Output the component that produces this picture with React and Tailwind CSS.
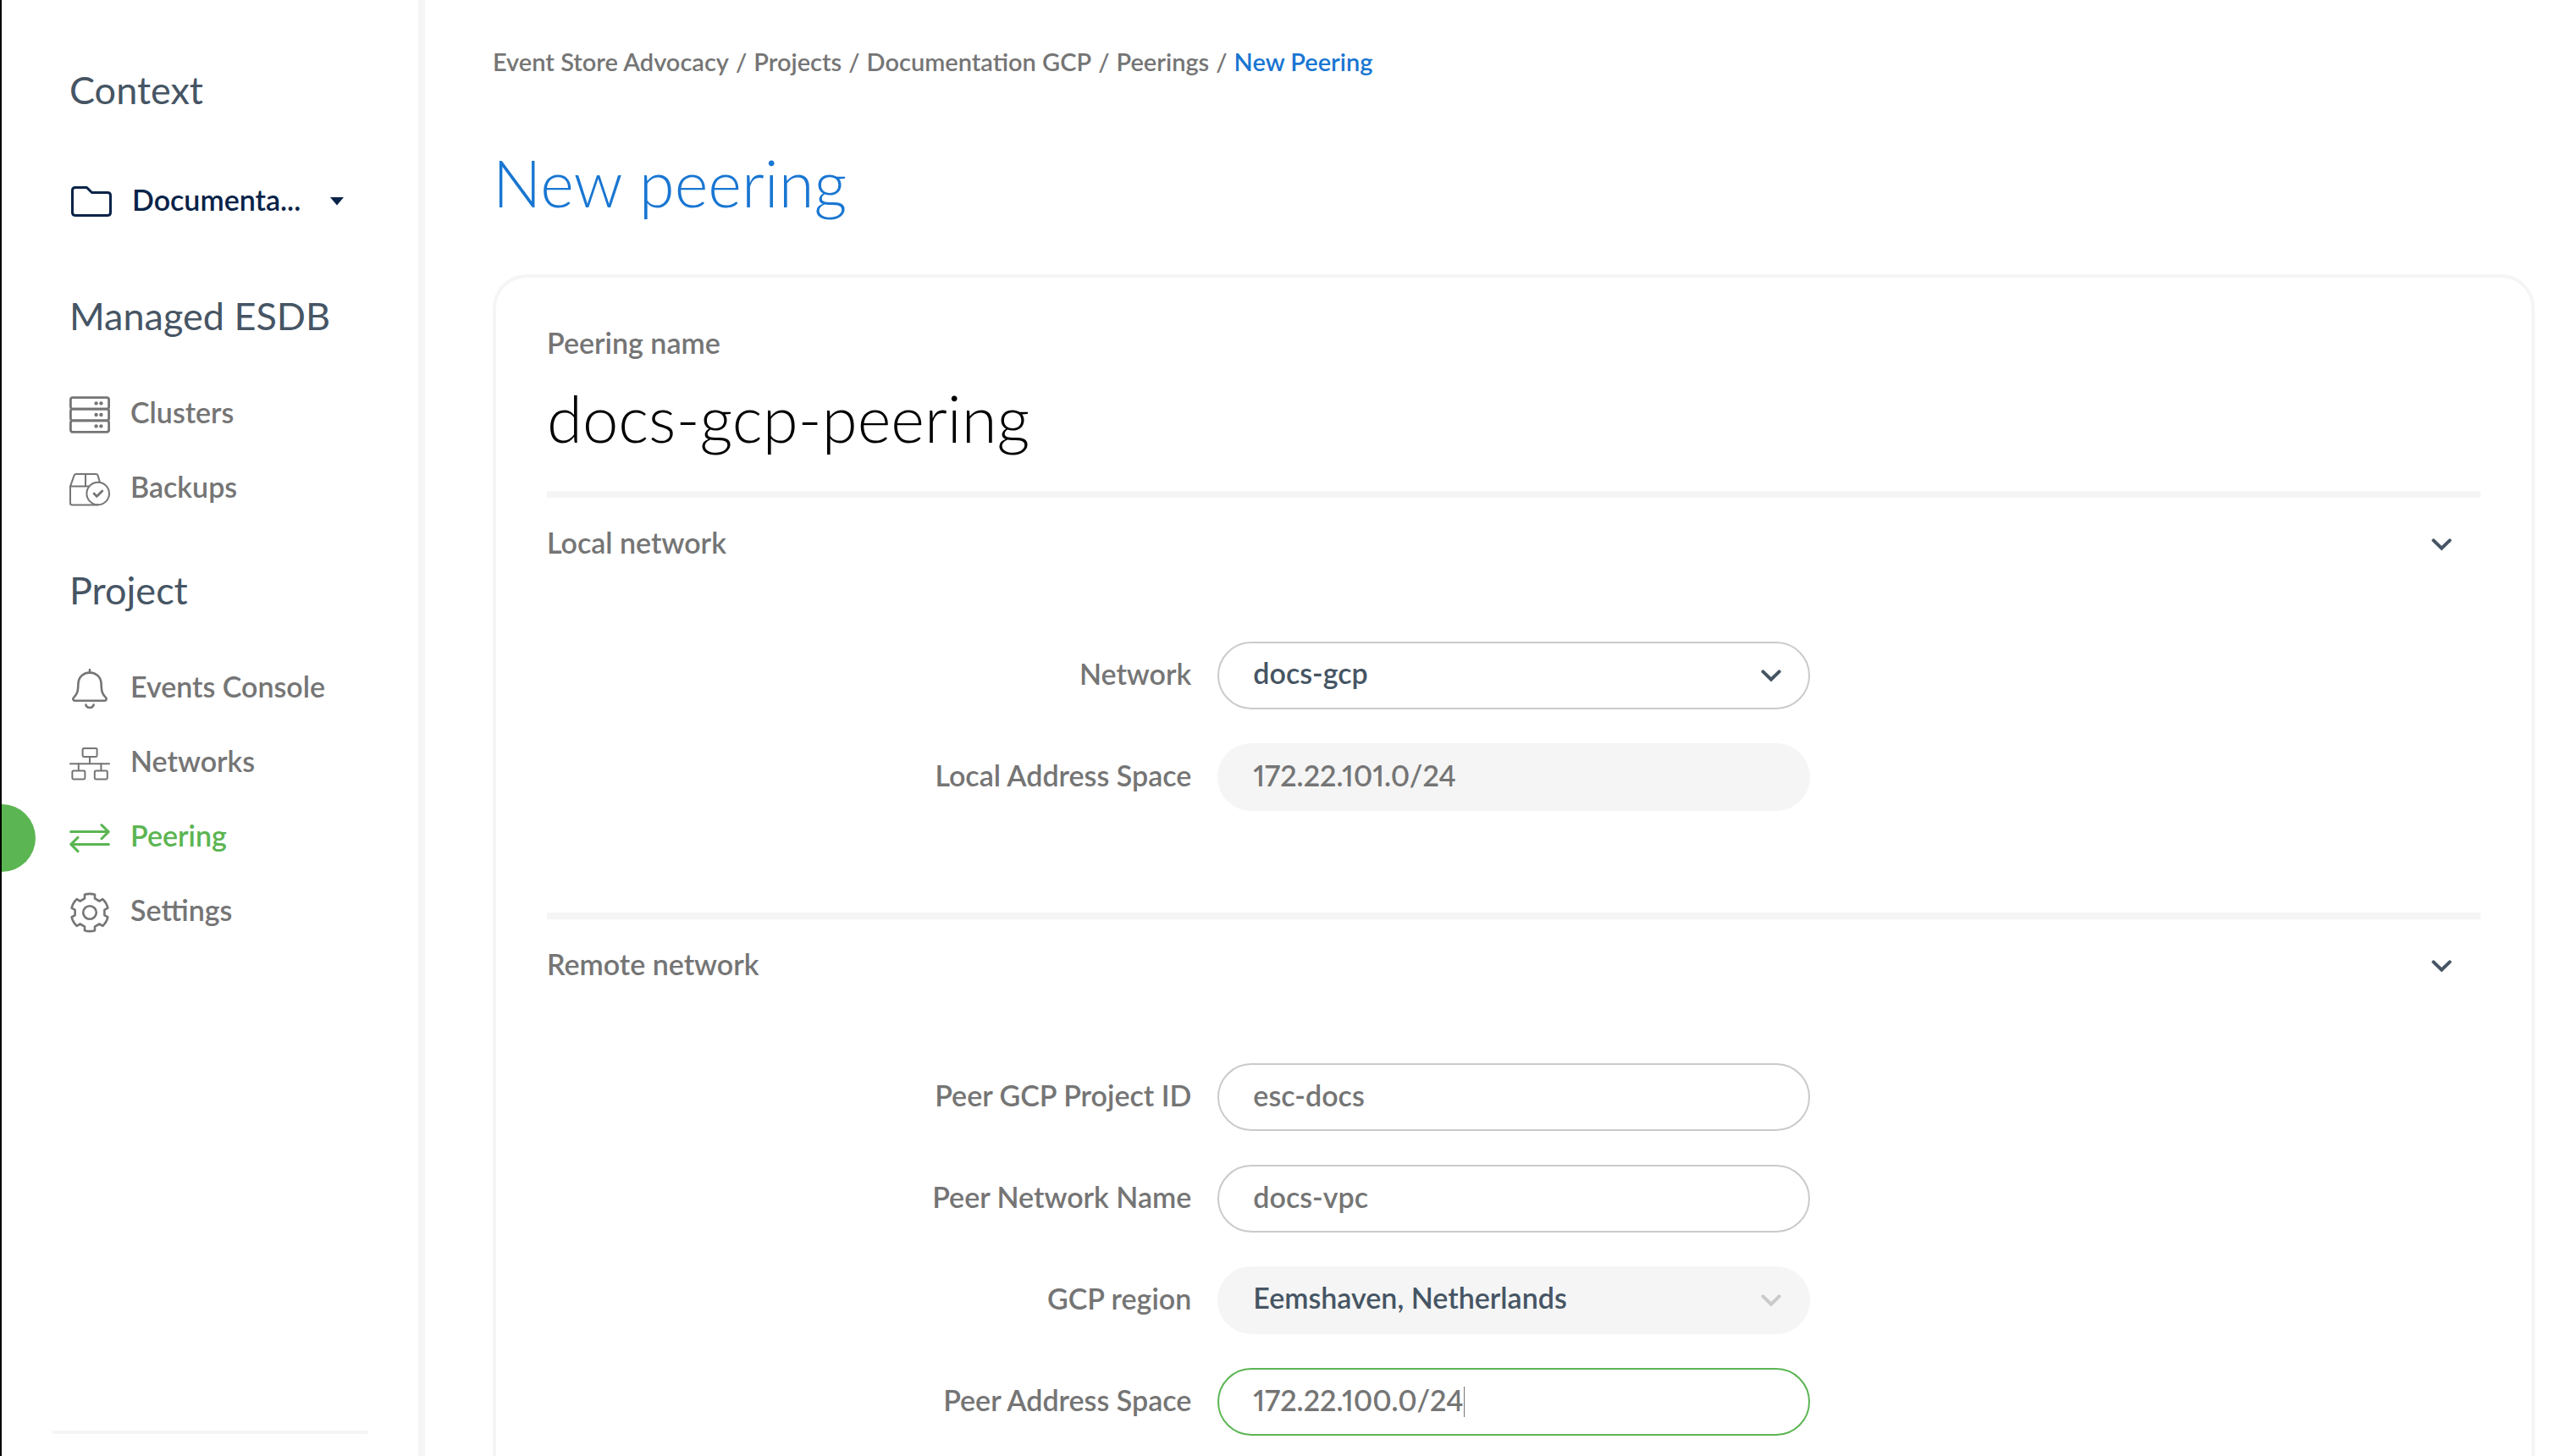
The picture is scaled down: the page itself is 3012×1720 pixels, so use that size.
import React from "react";

const CARD_LINE = "border-[#f5f5f5]";

function Icon({ children, stroke = 2 }) {
  return (
    <svg
      className="mt-1 size-12 shrink-0"
      viewBox="0 0 48 48"
      fill="none"
      stroke="currentColor"
      strokeWidth={stroke}
      strokeLinecap="round"
      strokeLinejoin="round"
      aria-hidden="true"
    >
      {children}
    </svg>
  );
}

function ClustersIcon() {
  return (
    <Icon stroke={2.8}>
      <rect x="1.4" y="3.6" width="45.2" height="13.6" rx="2.6" />
      <rect x="1.4" y="17.2" width="45.2" height="13.6" rx="2.6" />
      <rect x="1.4" y="30.8" width="45.2" height="13.6" rx="2.6" />
      <g fill="currentColor" stroke="none">
        <circle cx="31.6" cy="10.4" r="2.2" />
        <circle cx="37.4" cy="10.4" r="2.2" />
        <circle cx="31.6" cy="24" r="2.2" />
        <circle cx="37.4" cy="24" r="2.2" />
        <circle cx="31.6" cy="37.4" r="2.2" />
        <circle cx="37.4" cy="37.4" r="2.2" />
      </g>
    </Icon>
  );
}

function BackupsIcon() {
  return (
    <Icon>
      <path d="M35.8 15.4 33.6 7.6Q33 6 31.2 6H7.8Q6.2 6 5.6 7.6L1 20.6V40.2Q1 42.4 3.2 42.4H33.6" />
      <path d="M19 6v14.6M1 20.6h22" />
      <circle cx="33.7" cy="29" r="13.3" />
      <path d="m29 29 3.2 3.4 6.6-6.4" strokeWidth="2.8" />
    </Icon>
  );
}

function BellIcon() {
  return (
    <Icon stroke={2.6}>
      <path d="M24 1.2v3" />
      <path d="M24 4.6C16 4.6 10.6 10.4 10.4 18L10.2 22C10 28 8.6 30.6 5.6 33.4 3.2 35.6 4.6 37.8 7 37.8H41C43.4 37.8 44.8 35.6 42.4 33.4 39.4 30.6 38 28 37.8 22L37.6 18C37.4 10.4 32 4.6 24 4.6Z" />
      <path d="M19.4 42.6a4.8 4.8 0 0 0 9.2 0" />
    </Icon>
  );
}

function NetworksIcon() {
  return (
    <Icon>
      <rect x="15.6" y="6" width="17" height="10" rx="1.4" />
      <rect x="3.4" y="32.4" width="15" height="10" rx="1.4" />
      <rect x="29.8" y="32.4" width="15" height="10" rx="1.4" />
      <path d="M24 16v8M1 24.2h46M10.8 24v8M37.4 24v8" />
    </Icon>
  );
}

function PeeringIcon() {
  return (
    <Icon stroke={3}>
      <path d="M1.6 16.6h44M38 8.6l8.2 8-8.2 8.2" />
      <path d="M46.4 31.4h-44M10 23.4l-8.2 8 8.2 8.2" />
    </Icon>
  );
}

const rotate = (x, y, deg) => {
  const a = (deg * Math.PI) / 180;
  const px = 24 + x * Math.cos(a) - y * Math.sin(a);
  const py = 24 + x * Math.sin(a) + y * Math.cos(a);
  return `${px.toFixed(2)} ${py.toFixed(2)}`;
};

const gearPath =
  [0, 60, 120, 180, 240, 300]
    .map(
      (d, i) =>
        `${i ? "L" : "M"}${rotate(-6, -16.6, d)}L${rotate(-6, -21.2, d)}Q${rotate(0, -23, d)} ${rotate(6, -21.2, d)}L${rotate(6, -16.6, d)}`
    )
    .join("") + "Z";

function SettingsIcon() {
  return (
    <Icon stroke={2.6}>
      <path d={gearPath} />
      <circle cx="24" cy="24" r="7.8" />
    </Icon>
  );
}

function Chevron({ className }) {
  return (
    <svg
      className={className}
      width="24"
      height="16"
      viewBox="0 0 24 16"
      fill="none"
      stroke="currentColor"
      strokeWidth="4"
      strokeLinecap="round"
      aria-hidden="true"
    >
      <path d="m2.4 3.4 9.6 9.4 9.6-9.4" />
    </svg>
  );
}

function SideHeading({ children }) {
  return <h2 className="text-[45px] leading-14 font-normal text-[#465564]">{children}</h2>;
}

function NavList({ items }) {
  return (
    <ul className="mt-[43px]">
      {items.map(({ label, Glyph, active }) => (
        <li key={label} className="relative">
          {active && (
            <span className="absolute top-1.5 -left-20 h-20 w-10 rounded-r-full bg-[#5bb552]" />
          )}
          <a
            href="#"
            aria-current={active ? "page" : undefined}
            className={
              active
                ? "flex h-22 items-center gap-6 text-[#5bb552]"
                : "flex h-22 items-center gap-6 text-[#757575]"
            }
          >
            <Glyph />
            <span className="pb-0.5">{label}</span>
          </a>
        </li>
      ))}
    </ul>
  );
}

function Sidebar() {
  return (
    <aside className="flex w-[502px] shrink-0 flex-col border-r-8 border-l-2 border-r-[#f5f5f5] border-l-black pt-[78px] pl-20">
      <SideHeading>Context</SideHeading>
      <button
        type="button"
        className="mt-[58px] flex h-22 w-[324px] items-center gap-6 text-[#082348]"
      >
        <svg
          className="mt-1 shrink-0"
          width="50"
          height="36"
          viewBox="0 0 50 36"
          fill="none"
          stroke="currentColor"
          strokeWidth="3"
          strokeLinejoin="round"
          aria-hidden="true"
        >
          <path d="M3.5 5Q3.5 1.5 7 1.5H20.5L26.5 7.5H45Q48.5 7.5 48.5 11V31Q48.5 34.5 45 34.5H7Q3.5 34.5 3.5 31Z" />
        </svg>
        <span className="flex-1 text-left">Documenta...</span>
        <svg
          className="mt-1"
          width="16"
          height="10"
          viewBox="0 0 16 10"
          fill="currentColor"
          aria-hidden="true"
        >
          <path d="M0 0h16L8 9.4Z" />
        </svg>
      </button>
      <nav aria-label="Main" className="mt-[65px]">
        <SideHeading>Managed ESDB</SideHeading>
        <NavList
          items={[
            { label: "Clusters", Glyph: ClustersIcon },
            { label: "Backups", Glyph: BackupsIcon },
          ]}
        />
        <div className="mt-[49px]">
          <SideHeading>Project</SideHeading>
        </div>
        <NavList
          items={[
            { label: "Events Console", Glyph: BellIcon },
            { label: "Networks", Glyph: NetworksIcon },
            { label: "Peering", Glyph: PeeringIcon, active: true },
            { label: "Settings", Glyph: SettingsIcon },
          ]}
        />
      </nav>
      <hr className="mt-auto mr-15 mb-[26px] -ml-5 border-t-4 border-[#f5f5f5]" />
    </aside>
  );
}

function Breadcrumbs() {
  const trail = ["Event Store Advocacy", "Projects", "Documentation GCP", "Peerings"];
  return (
    <nav aria-label="Breadcrumb" className="text-[29px] leading-10">
      <ol className="flex gap-2">
        {trail.map((name) => (
          <li key={name} className="flex gap-2">
            <a href="#">{name}</a>
            <span>/</span>
          </li>
        ))}
        <li>
          <a href="#" aria-current="page" className="text-[#1976d2]">
            New Peering
          </a>
        </li>
      </ol>
    </nav>
  );
}

function Section({ title, children }) {
  return (
    <section className={`border-t-8 pb-30 ${CARD_LINE}`}>
      <h2>
        <button
          type="button"
          aria-expanded="true"
          className="flex h-[110px] w-full items-center justify-between pr-[34px] text-[#757575]"
        >
          <span className="pb-1">{title}</span>
          <Chevron className="text-[#465564]" />
        </button>
      </h2>
      <div className="mt-15 flex flex-col gap-10">{children}</div>
    </section>
  );
}

function Row({ id, label, children }) {
  return (
    <div className="flex items-center gap-[31px]">
      <label htmlFor={id} className="w-1/3 pb-1 text-right">
        {label}
      </label>
      <div className="relative w-full max-w-[700px]">{children}</div>
    </div>
  );
}

function TextRow({ id, label, value, disabled, focused }) {
  const tone = disabled
    ? "border-[#f5f5f5] bg-[#f5f5f5]"
    : focused
      ? "border-[#5bb552] bg-white"
      : "border-[#cacaca] bg-white";
  return (
    <Row id={id} label={label}>
      <input
        id={id}
        type="text"
        defaultValue={value}
        disabled={disabled}
        className={`block h-20 w-full rounded-full border-2 px-10 pb-1.5 text-[#757575] proportional-nums outline-none ${tone}`}
      />
      {focused && <span className="absolute top-[22px] left-[291px] h-9 w-px bg-[#757575]" />}
    </Row>
  );
}

function SelectRow({ id, label, value, disabled }) {
  return (
    <Row id={id} label={label}>
      <select
        id={id}
        disabled={disabled}
        defaultValue={value}
        className={`block h-20 w-full appearance-none rounded-full border-2 px-10 pb-1.5 text-[#465564] opacity-100 outline-none ${
          disabled ? "border-[#f5f5f5] bg-[#f5f5f5]" : "border-[#cacaca] bg-white"
        }`}
      >
        <option>{value}</option>
      </select>
      <Chevron
        className={`pointer-events-none absolute top-8 right-[34px] ${
          disabled ? "text-[#cacaca]" : "text-[#465564]"
        }`}
      />
    </Row>
  );
}

export default function App() {
  return (
    <div className="flex h-screen overflow-hidden bg-white font-['Lato',sans-serif] text-[34px] leading-10 font-semibold text-[#757575]">
      <Sidebar />
      <main className="h-full min-w-0 flex-1 overflow-hidden pt-[53px] pr-[18px] pl-20">
        <Breadcrumbs />
        <h1 className="mt-[79px] text-[76px] leading-22 font-light text-[#1976d2]">New peering</h1>
        <form className={`mt-16 rounded-[40px] border-4 px-15 pt-[57px] ${CARD_LINE}`}>
          <label htmlFor="peering-name" className="block">
            Peering name
          </label>
          <input
            id="peering-name"
            type="text"
            defaultValue="docs-gcp-peering"
            className="mt-[25px] mb-[42px] block h-22 w-full text-[76px] leading-22 font-light text-black outline-none"
          />
          <Section title="Local network">
            <SelectRow id="network" label="Network" value="docs-gcp" />
            <TextRow id="local-space" label="Local Address Space" value="172.22.101.0/24" disabled />
          </Section>
          <Section title="Remote network">
            <TextRow id="peer-project" label="Peer GCP Project ID" value="esc-docs" />
            <TextRow id="peer-network" label="Peer Network Name" value="docs-vpc" />
            <SelectRow id="region" label="GCP region" value="Eemshaven, Netherlands" disabled />
            <TextRow id="peer-space" label="Peer Address Space" value="172.22.100.0/24" focused />
          </Section>
        </form>
      </main>
    </div>
  );
}
